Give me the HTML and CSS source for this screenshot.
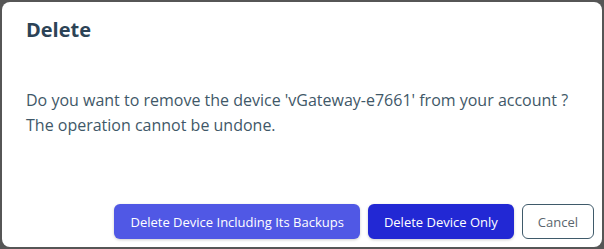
FILE: index.html
```html
<!DOCTYPE html>
<html>
<head>
<meta charset="utf-8">
<link rel="stylesheet" href="styles.css">
</head>
<body>
<div class="dialog">
  <h2 class="title">Delete</h2>
  <div class="message">
    <p>Do you want to remove the device 'vGateway-e7661' from your account ?</p>
    <p>The operation cannot be undone.</p>
  </div>
  <div class="actions">
    <button class="btn btn-soft">Delete Device Including Its Backups</button>
    <button class="btn btn-primary">Delete Device Only</button>
    <button class="btn btn-outline">Cancel</button>
  </div>
</div>
</body>
</html>
```
FILE: styles.css
```css
html, body {
  margin: 0;
  padding: 0;
}
body {
  background: #565656;
  width: 604px;
  height: 249px;
  padding: 2px;
  box-sizing: border-box;
  font-family: "Open Sans", sans-serif;
}
.dialog {
  background: #fff;
  border-radius: 8px;
  height: 245px;
  box-sizing: border-box;
  padding: 14px 8px 0 24px;
  display: flex;
  flex-direction: column;
}
.title {
  margin: 0;
  font-size: 20px;
  font-weight: 700;
  color: #2c4356;
  line-height: 27px;
}
.message {
  margin-top: 45px;
  color: #3f5868;
  font-size: 16px;
  line-height: 25px;
}
.message p {
  margin: 0;
}
.actions {
  margin-top: auto;
  margin-bottom: 8px;
  display: flex;
  justify-content: flex-end;
  gap: 8px;
}
.btn {
  font-family: "Open Sans", sans-serif;
  font-size: 13px;
  height: 35px;
  border-radius: 6px;
  border: 1px solid transparent;
  padding: 0 15px;
  color: #fff;
  box-shadow: 0 1px 3px rgba(0,0,0,0.2);
}
.btn-soft {
  background: #5058e5;
}
.btn-primary {
  background: #2228d4;
}
.btn-outline {
  background: #fff;
  border-color: #3f5a6a;
  color: #5a666e;
  box-shadow: none;
}
```
